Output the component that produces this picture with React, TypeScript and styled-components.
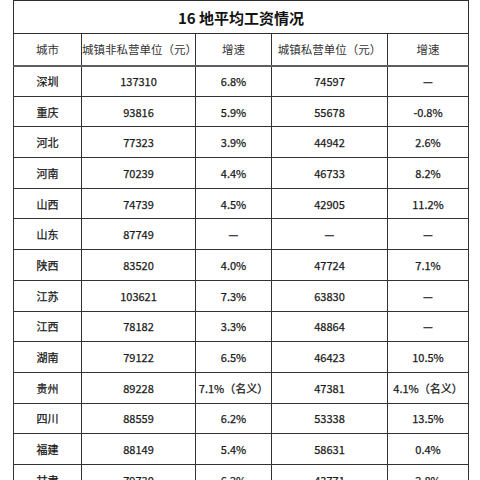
import React from 'react';
import styled, { createGlobalStyle } from 'styled-components';

const GlobalStyle = createGlobalStyle`
  html, body {
    margin: 0;
    padding: 0;
    background: #ffffff;
  }
  body {
    font-family: "Noto Sans CJK SC", "Liberation Sans", sans-serif;
    color: #1e1e1e;
  }
`;

const Page = styled.div`
  width: 480px;
  height: 480px;
  overflow: hidden;
  padding-left: 13px;
  box-sizing: border-box;
`;

const Table = styled.table`
  border-collapse: collapse;
  table-layout: fixed;
  width: 455px;
`;

const TitleCell = styled.td`
  height: 32px;
  padding: 0;
  border: 1px solid #2e2e2e;
  text-align: center;
  font-size: 15px;
  font-weight: 700;
  color: #111;
`;

const Row = styled.tr<{ $h: number }>`
  height: ${p => p.$h}px;
`;

const Cell = styled.td<{ $head?: boolean }>`
  padding: 0;
  border: 1px solid #333;
  border-bottom: ${p => (p.$head ? '2px solid #5e5e5e' : '1px solid #333')};
  text-align: center;
  font-size: ${p => (p.$head ? '11.5px' : '11px')};
  color: ${p => (p.$head ? '#333' : '#1a1a1a')};
  -webkit-text-stroke: ${p => (p.$head ? '0' : '0.25px #1a1a1a')};
  white-space: nowrap;
`;

const rows: string[][] = [
  ['深圳', '137310', '6.8%', '74597', '—'],
  ['重庆', '93816', '5.9%', '55678', '-0.8%'],
  ['河北', '77323', '3.9%', '44942', '2.6%'],
  ['河南', '70239', '4.4%', '46733', '8.2%'],
  ['山西', '74739', '4.5%', '42905', '11.2%'],
  ['山东', '87749', '—', '—', '—'],
  ['陕西', '83520', '4.0%', '47724', '7.1%'],
  ['江苏', '103621', '7.3%', '63830', '—'],
  ['江西', '78182', '3.3%', '48864', '—'],
  ['湖南', '79122', '6.5%', '46423', '10.5%'],
  ['贵州', '89228', '7.1%（名义）', '47381', '4.1%（名义）'],
  ['四川', '88559', '6.2%', '53338', '13.5%'],
  ['福建', '88149', '5.4%', '58631', '0.4%'],
  ['甘肃', '79730', '6.2%', '43771', '2.8%'],
];

const App: React.FC = () => {
  return (
    <>
      <GlobalStyle />
      <Page>
        <Table>
          <colgroup>
            <col style={{ width: 68 }} />
            <col style={{ width: 114 }} />
            <col style={{ width: 76 }} />
            <col style={{ width: 116 }} />
            <col style={{ width: 81 }} />
          </colgroup>
          <tbody>
            <tr>
              <TitleCell colSpan={5}>16 地平均工资情况</TitleCell>
            </tr>
            <Row $h={32}>
              <Cell $head>城市</Cell>
              <Cell $head>城镇非私营单位（元）</Cell>
              <Cell $head>增速</Cell>
              <Cell $head>城镇私营单位（元）</Cell>
              <Cell $head>增速</Cell>
            </Row>
            {rows.map(r => (
              <Row $h={30.7} key={r[0]}>
                {r.map((c, i) => (
                  <Cell key={i}>{c}</Cell>
                ))}
              </Row>
            ))}
          </tbody>
        </Table>
      </Page>
    </>
  );
};

export default App;
